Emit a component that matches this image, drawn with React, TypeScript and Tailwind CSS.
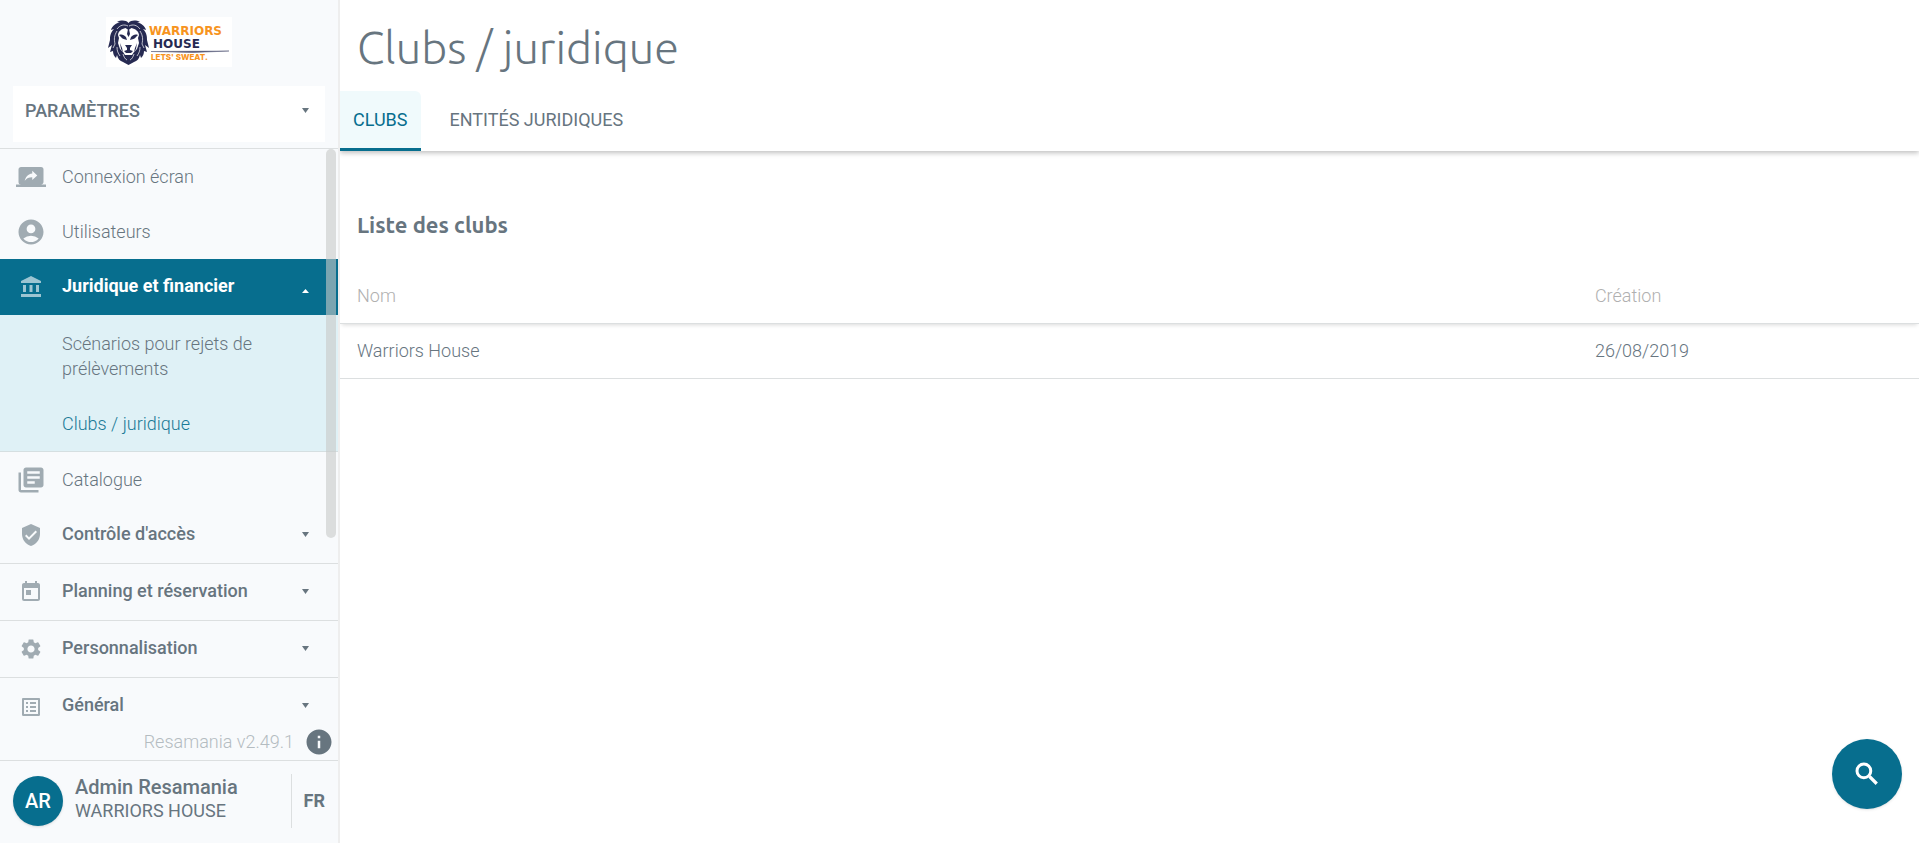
import type { ReactNode } from "react";
import type { IconType } from "react-icons";
import {
  MdAccountBalance,
  MdAccountCircle,
  MdInfo,
  MdLibraryBooks,
  MdListAlt,
  MdScreenShare,
  MdSettings,
  MdToday,
  MdVerifiedUser,
} from "react-icons/md";

type NavGroup = {
  label: string;
  icon: IconType;
};

const groups: NavGroup[] = [
  { label: "Contrôle d'accès", icon: MdVerifiedUser },
  { label: "Planning et réservation", icon: MdToday },
  { label: "Personnalisation", icon: MdSettings },
  { label: "Général", icon: MdListAlt },
];

const clubs = [{ name: "Warriors House", createdAt: "26/08/2019" }];

function Caret({ up = false }: { up?: boolean }) {
  return (
    <svg viewBox="0 0 7 5" className={up ? "mt-2 h-1 w-[7px] rotate-180" : "mb-[2px] h-[5px] w-[7px]"} preserveAspectRatio="none">
      <path d="M0 0h7L3.500 5z" fill="currentColor" />
    </svg>
  );
}

function SearchIcon() {
  return (
    <svg viewBox="0 0 24 24" className="size-[30px]" fill="none" stroke="currentColor">
      <circle cx="9.500" cy="9.500" r="5.500" strokeWidth="2.400" />
      <path d="M14 14l5.800 5.800" strokeWidth="2.600" />
    </svg>
  );
}

function Logo() {
  return (
    <svg viewBox="0 0 126 50" className="h-[50px] w-[126px]" role="img" aria-label="Warriors House">
      <rect width="126" height="50" fill="#fff" />
      {/* mane */}
      <path
        fill="#262a52"
        d="M22.500 6C20 3 15 3 11 5l3 .5C10 6 6 9 5 13l3-1c-4 4-4 8-4 11l-2 8 4-3-2 7 3-1c0 3 1 5 3 7l1-3c1 4 3 6 6 7l5.500 3L28 45c3-1 5-3 6-7l1 3c2-2 3-4 3-7l3 1-2-7 4 3-2-8c0-3 0-7-4-11l3 1c-1-4-5-7-9-7.500l3-.5c-4-2-9-2-11.500 1z"
      />
      {/* parting in the mane */}
      <path
        d="M22 9C18 7 14 8 11 12M23 9c4-2 8-1 11 3M11 14c-3 5-3 8-2 13l-2 4M34 14c3 5 3 8 2 13l2 4M11 30c0 4 1 6 3 9M34 30c0 4-1 6-3 9M17 37c1 3 2 5 4 6M28 37c-1 3-2 5-4 6"
        fill="none"
        stroke="#fff"
        strokeWidth=".7"
      />
      {/* face */}
      <path
        fill="#fff"
        d="M22.500 13l3-2c4 1 7 3 7.500 7l-1 3 1 5-2 6-3 3-2 3h-7l-2-3-3-3-2-6 1-5-1-3c.5-4 3.500-6 7.500-7z"
      />
      <path
        fill="#262a52"
        d="M13 18c3-1 5 0 7 2l1 3c-2-1-5-1-6-3zM32 18c-3-1-5 0-7 2l-1 3c2-1 5-1 6-3zM19 28h7l-2 3v2l3 1-2 2h-5l-2-2 3-1v-2zM22 12h1l1 5-1.500 3-1.500-3zM14 26l2 5 1 4-2-3zM31 26l-2 5-1 4 2-3z"
      />
      <g fontFamily="'DejaVu Sans', sans-serif" fontWeight="700">
        <text x="43" y="18" fontSize="12" fill="#f7941e">WARRIORS</text>
        <text x="47" y="31" fontSize="12" fill="#262a52">HOUSE</text>
      </g>
      <text x="45" y="43" fontSize="8" fontWeight="800" fontFamily="Inter, sans-serif" fill="#f7941e">
        LETS&apos; SWEAT.
      </text>
      <path d="M45 34.500L123 34l-36 1.500z" fill="#262a52" stroke="#6b6e8a" strokeWidth=".6" />
    </svg>
  );
}

function NavLink({ icon: Icon, children }: { icon: IconType; children: ReactNode }) {
  return (
    <a href="#" className="flex h-[55px] items-center font-light">
      <span className="flex w-[62px] justify-center">
        <Icon className="size-[30px] text-[#a0abb2]" />
      </span>
      {children}
    </a>
  );
}

function Sidebar() {
  return (
    <aside className="relative z-10 flex w-[340px] shrink-0 flex-col border-r-2 border-[#eeeeee] bg-[#f8fafc]">
      <div className="flex h-[86px] shrink-0 justify-center pt-[17px]">
        <Logo />
      </div>
      <button className="mx-[13px] mb-[6px] flex h-14 shrink-0 items-start justify-between bg-white pt-[13px] pr-4 pl-3 font-medium">
        PARAMÈTRES
        <span className="flex h-6 items-center">
          <Caret />
        </span>
      </button>

      <div className="relative flex min-h-0 flex-1 flex-col border-t border-[#dcdfe0]">
        <nav className="min-h-0 flex-1 overflow-hidden">
          <NavLink icon={MdScreenShare}>Connexion écran</NavLink>
          <NavLink icon={MdAccountCircle}>Utilisateurs</NavLink>

          <button className="flex h-14 w-full items-center bg-[#076e8e] pr-[29px] text-left font-bold text-white">
            <span className="flex w-[62px] justify-center">
              <MdAccountBalance className="size-6 text-[#9cc5d2]" />
            </span>
            <span className="flex-1 pb-[2px]">Juridique et financier</span>
            <Caret up />
          </button>
          <div className="border-b border-[#d5dfe1] bg-[#dff1f6] pl-[62px] font-light">
            <a href="#" className="block pt-4 pr-14 pb-[15px] leading-[25px]">
              Scénarios pour rejets de prélèvements
            </a>
            <a href="#" className="flex h-[55px] items-center text-[#1a7a97]">
              Clubs / juridique
            </a>
          </div>
          <NavLink icon={MdLibraryBooks}>Catalogue</NavLink>

          {groups.map(({ label, icon: Icon }) => (
            <button
              key={label}
              className="flex h-[57px] w-full items-center border-b border-[#dcdfe0] pr-[29px] text-left font-medium last:border-b-0"
            >
              <span className="flex w-[62px] justify-center">
                <Icon className="size-6 text-[#a0abb2]" />
              </span>
              <span className="flex-1 pb-[3px]">{label}</span>
              <Caret />
            </button>
          ))}
        </nav>
        <div className="absolute top-0 right-[2px] h-[389px] w-[10px] rounded-full bg-[#c8cac8]/60" />
        <div className="flex h-9 shrink-0 items-center justify-end gap-[10px] pr-1 font-light text-[#b4bcc1]">
          Resamania v2.49.1
          <button aria-label="Informations">
            <MdInfo className="size-[30px] text-[#67757f]" />
          </button>
        </div>
      </div>

      <div className="flex h-[83px] shrink-0 items-center border-t border-[#dcdfe0] px-[13px] pb-[2px]">
        <span className="flex size-[50px] items-center justify-center rounded-full bg-[#076e8e] text-xl font-medium text-white shadow">
          AR
        </span>
        <div className="ml-3 flex-1 pb-1">
          <p className="text-xl leading-6 font-medium">Admin Resamania</p>
          <p>WARRIORS HOUSE</p>
        </div>
        <button className="h-[54px] border-l border-[#dcdfe0] pl-3 font-bold">FR</button>
      </div>
    </aside>
  );
}

export default function App() {
  return (
    <div className="flex h-screen bg-white font-[Roboto,sans-serif] text-lg leading-6 text-[#67757f]">
      <Sidebar />
      <main className="min-w-0 flex-1">
        <header className="shadow-[0_2px_5px_rgba(0,0,0,0.25)]">
          <h1 className="flex h-[91px] items-center px-[17px] pt-1 font-[Ubuntu,'Open_Sans',sans-serif] text-[45px] font-light">
            Clubs / juridique
          </h1>
          <div role="tablist" className="flex h-[60px]">
            <button
              role="tab"
              aria-selected="true"
              className="rounded-tr-md border-b-3 border-[#076e8e] bg-[#f0fafc] px-[13px] text-[#076e8e]"
            >
              CLUBS
            </button>
            <button role="tab" aria-selected="false" className="ml-4 border-b-3 border-transparent px-[13px]">
              ENTITÉS JURIDIQUES
            </button>
          </div>
        </header>

        <h2 className="px-[17px] pt-[60px] pb-[29px] font-[Ubuntu,'Open_Sans',sans-serif] text-[22px] leading-7 font-bold">
          Liste des clubs
        </h2>
        <table className="w-full table-fixed text-left font-light">
          <thead className="shadow-[0_4px_4px_-2px_rgba(0,0,0,0.15)]">
            <tr className="h-[55px] border-b border-[#dcdfe0] text-[#b0b0b0]">
              <th className="w-[78.4%] px-[17px] pt-[2px] font-light">Nom</th>
              <th className="px-[17px] pt-[2px] font-light">Création</th>
            </tr>
          </thead>
          <tbody>
            {clubs.map((club) => (
              <tr key={club.name} className="h-[55px] border-b border-[#dcdfe0]">
                <td className="px-[17px]">{club.name}</td>
                <td className="px-[17px]">{club.createdAt}</td>
              </tr>
            ))}
          </tbody>
        </table>
      </main>

      <button
        aria-label="Rechercher"
        className="fixed right-[17px] bottom-[34px] flex size-[70px] items-center justify-center rounded-full bg-[#076e8e] text-white shadow"
      >
        <SearchIcon />
      </button>
    </div>
  );
}
